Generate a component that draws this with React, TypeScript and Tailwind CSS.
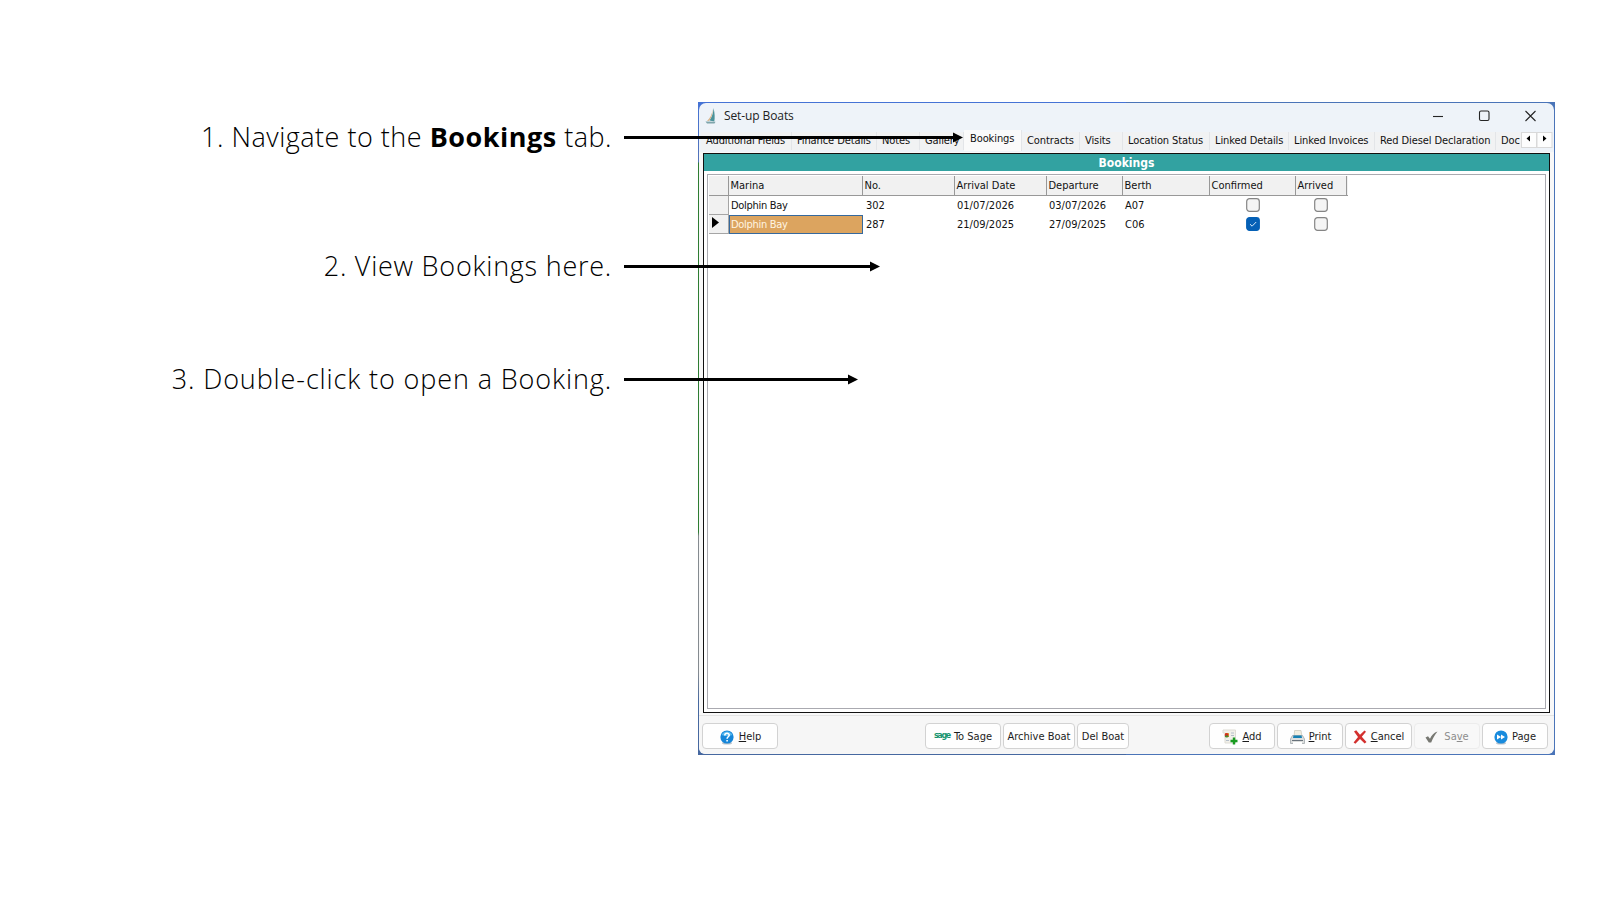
import React from 'react';
import { clsx } from 'clsx';

type Column = { title: string; className: string; check?: boolean };

const TABS = [
  { label: 'Additional Fields', className: 'w-[91px]' },
  { label: 'Finance Details', className: 'w-[85px]' },
  { label: 'Notes', className: 'w-[43px]' },
  { label: 'Gallery', className: 'w-[44px]' },
  { label: 'Bookings', className: 'w-[58px]', active: true },
  { label: 'Contracts', className: 'w-[58px]' },
  { label: 'Visits', className: 'w-[43px]' },
  { label: 'Location Status', className: 'w-[87px]' },
  { label: 'Linked Details', className: 'w-[79px]' },
  { label: 'Linked Invoices', className: 'w-[86px]' },
  { label: 'Red Diesel Declaration', className: 'w-[121px]' },
  { label: 'Doc', className: 'w-[25px] border-r-0' },
];

const COLUMNS: Column[] = [
  { title: 'Marina', className: 'w-[134px]' },
  { title: 'No.', className: 'w-[92px]' },
  { title: 'Arrival Date', className: 'w-[92px]' },
  { title: 'Departure', className: 'w-[76px]' },
  { title: 'Berth', className: 'w-[87px]' },
  { title: 'Confirmed', className: 'w-[86px]', check: true },
  { title: 'Arrived', className: 'w-[51px]', check: true },
];

const ROWS: (string | boolean)[][] = [
  ['Dolphin Bay', '302', '01/07/2026', '03/07/2026', 'A07', false, false],
  ['Dolphin Bay', '287', '21/09/2025', '27/09/2025', 'C06', true, false],
];

const Arrow = ({ length }: { length: number }) => (
  <svg width={length} height="13" viewBox={`0 0 ${length} 13`} className="mt-px shrink-0">
    <path d={`M0 6.5H${length - 8}`} stroke="#000" strokeWidth="3" />
    <path d={`M${length - 10} 1.5L${length} 6.5L${length - 10} 11.5Z`} />
  </svg>
);

const Step = ({ length, className, children }: { length: number; className: string; children: React.ReactNode }) => (
  <div className={clsx('flex h-8 items-center gap-3', className)}>
    <p className="w-[612px] shrink-0 pb-px text-right whitespace-nowrap font-['Open_Sans',sans-serif] text-[27px] leading-[30px] font-light">
      {children}
    </p>
    <Arrow length={length} />
  </div>
);

const CheckBox = ({ checked }: { checked: boolean }) => (
  <svg width="14" height="14" viewBox="0 0 14 14" className="mr-[2px] mb-[2px]">
    <rect x="0.7" y="0.7" width="12.6" height="12.6" rx="2.8" fill={checked ? '#0560b6' : '#f5f5f5'} stroke={checked ? '#0560b6' : '#858585'} strokeWidth="1.2" />
    {checked && <path d="M4 7.2L6.1 9.2L10.2 5" fill="none" stroke="#d5eafa" strokeWidth="1" />}
  </svg>
);

const BoatIcon = () => (
  <svg width="12" height="16" viewBox="0 0 12 16" className="-ml-px">
    <path d="M8.5 0C9.8 5 10 10 9.3 13.5L4.5 12.5C7 9 8.4 5 8.5 0Z" fill="#4b929a" />
    <path d="M7.6 1C7.2 6 5 10.5 2 13L4.2 12.8C6.5 9.5 7.9 5 7.6 1Z" fill="#d8b184" />
    <path d="M0.5 13.6L10.5 13.8L9.5 15.5H2Z" fill="#7fa5ac" />
  </svg>
);

const HelpIcon = () => (
  <svg width="14" height="15" viewBox="0 0 14 15">
    <ellipse cx="7" cy="13" rx="5" ry="1.6" fill="#b8c2cc" />
    <circle cx="7" cy="7" r="6.6" fill="#1686d9" />
    <path d="M1.5 5A6 6 0 0 1 12.5 5Q7 7 1.5 5Z" fill="#55b8ee" />
    <path d="M4.8 5.4C4.8 2.6 9.4 2.7 9.2 5.2C9.1 6.8 7.1 6.8 7.1 8.7M7.1 10V11.4" fill="none" stroke="#fff" strokeWidth="1.6" />
  </svg>
);

const SageIcon = () => (
  <span className="flex h-[10px] w-4 items-center justify-center pb-[3px] font-['DejaVu_Sans',sans-serif] text-[8px] leading-none font-bold tracking-[-1.3px] text-[#169570]">
    sage
  </span>
);

const AddIcon = () => (
  <svg width="16" height="16" viewBox="0 0 16 16">
    <path d="M1 1H13.5V14H3V4H1Z" fill="#f1f0ea" stroke="#dedcd5" />
    <path d="M3 4H7V8H3Z" fill="#e6b63a" />
    <circle cx="4.6" cy="6" r="2" fill="#cf2e22" />
    <path d="M2.7 7.6A2.4 2.4 0 0 0 6.8 7.2L4.6 6Z" fill="#4a8a2c" />
    <path d="M9 4H12M9 6.5H12M4 11.5H7" stroke="#b4bec9" />
    <path d="M12 8.5V15.5M8.5 12H15.5" stroke="#189b20" strokeWidth="2.4" />
  </svg>
);

const PrintIcon = () => (
  <svg width="15" height="15" viewBox="0 0 15 15">
    <path d="M4 7L4.6 0.5H11L12 7Z" fill="#f2eee0" stroke="#c9c5b8" strokeWidth="0.7" />
    <path d="M2.5 5.5H12.5L14.5 9V13.5H0.5V9Z" fill="#dcdedd" stroke="#a1a8ac" strokeWidth="0.8" />
    <path d="M3.5 5.5H11.5L12 8H3Z" fill="#1681b3" />
    <path d="M2 10.5H13" stroke="#68727b" />
    <path d="M3 12H12V14.5H3Z" fill="#fff" />
  </svg>
);

const CancelIcon = () => (
  <svg width="14" height="14" viewBox="0 0 14 14">
    <path d="M1 1.5L3.2 0.3L7 4.7L11.5 0.5L13 1.7L8.8 6.8L13.5 12L11.7 13.5L7 9L2.4 13.7L0.6 12.4L5 6.9Z" fill="#d3302e" />
  </svg>
);

const SaveIcon = () => (
  <svg width="13" height="12" viewBox="0 0 13 12">
    <path d="M0.5 6.5L3 5.2L5 7.8C6.5 4 9 1.5 12.5 0.4C9.5 4 7.6 7.7 6.2 11.5H3.8Z" fill="#777872" />
  </svg>
);

const PageIcon = () => (
  <svg width="14" height="15" viewBox="0 0 14 15">
    <ellipse cx="7" cy="13" rx="5" ry="1.6" fill="#b8c2cc" />
    <circle cx="7" cy="7" r="6.6" fill="#198bdd" />
    <path d="M3 4.6L7 7L3 9.4ZM7 4.6L11 7L7 9.4Z" fill="#fff" />
  </svg>
);

const Button = ({ className, disabled, icon, children }: { className: string; disabled?: boolean; icon?: React.ReactNode; children: React.ReactNode }) => (
  <button
    className={clsx(
      'flex h-[26px] shrink-0 items-center justify-center rounded-[4px] border pt-[2px] whitespace-nowrap',
      disabled ? 'border-[#ececec] bg-[#f8f8f8] text-[#8d8d8d]' : 'border-[#d2d2d2] bg-[#fefefe] text-[#1c1c1c]',
      className,
    )}
  >
    {icon}
    <span>{children}</span>
  </button>
);

const Key = ({ children }: { children: string }) => <span className="underline underline-offset-1">{children}</span>;

const TitleBar = () => (
  <div className="flex h-[27px] shrink-0 items-center pb-[2px] pl-[7px]">
    <BoatIcon />
    <span className="ml-[7px] flex-1 font-['Open_Sans',sans-serif] text-[12px] tracking-[-0.1px] text-[#222]">Set-up Boats</span>
    <svg width="104" height="12" viewBox="0 0 104 12" fill="none" stroke="#252525" strokeWidth="1.1" className="mr-[17px]">
      <path d="M0 6.5H10" />
      <rect x="46.5" y="1" width="9.5" height="9.5" rx="1.5" />
      <path d="M92.5 1L102.5 11M102.5 1L92.5 11" />
    </svg>
  </div>
);

const TabBar = () => (
  <div className="flex h-[22px] shrink-0 items-start pl-[2px]">
    <div className="flex w-[820px] shrink-0 items-end">
      {TABS.map((tab) => (
        <div
          key={tab.label}
          className={clsx(
            'flex shrink-0 items-center border-r border-[#e3e5e8] tracking-[-0.1px] whitespace-nowrap',
            tab.active ? 'h-[21px] bg-[#fafafa] pb-[2px] pl-[6px]' : 'mb-px h-[18px] bg-[#f1f2f3] pt-px pl-[5px]',
            tab.className,
          )}
        >
          {tab.label}
        </div>
      ))}
    </div>
    <svg width="32" height="16" viewBox="0 0 32 16" className="mt-[2px]">
      <rect x="0.5" y="0.5" width="15" height="15" fill="#fdfdfd" stroke="#d9d9d9" />
      <rect x="16" y="0.5" width="15" height="15" fill="#fdfdfd" stroke="#d9d9d9" />
      <path d="M9 3.5V9.5L5.5 6.5ZM22 3.5V9.5L25.5 6.5Z" />
    </svg>
  </div>
);

const Grid = () => (
  <div className="mx-[3px] mt-[3px] mb-[3px] flex-1 border border-[#aaaab0] bg-white p-px">
    <div className="flex h-5 w-[639px] border-b border-[#989898] bg-[#f1f1f1]">
      <div className="w-5 shrink-0 border-r border-[#989898]" />
      {COLUMNS.map((col) => (
        <div key={col.title} className={clsx('shrink-0 border-r border-[#989898] pl-[1.5px] leading-[19px]', col.className)}>
          {col.title}
        </div>
      ))}
    </div>
    {ROWS.map((row, r) => (
      <div key={r} className="flex h-[19px]">
        <div className="flex w-5 shrink-0 border-r border-b border-[#a5a5a5] bg-[#f1f1f1]">
          {r === 1 && (
            <svg width="8" height="12" viewBox="0 0 8 12" className="mt-[2px] ml-[3px]">
              <path d="M0 0L7 5.5L0 11Z" />
            </svg>
          )}
        </div>
        {row.map((value, c) => (
          <div
            key={c}
            className={clsx(
              'flex shrink-0 items-center border',
              COLUMNS[c].className,
              COLUMNS[c].check ? 'justify-center' : 'pt-[2px]',
              c === 0 && 'tracking-[-0.3px]',
              c === 1 ? 'pl-[2px]' : 'pl-px',
              r === 1 && c === 0 ? 'border-[#36699d] bg-[#dca45f] text-[#fff4e2]' : 'border-transparent',
            )}
          >
            {typeof value === 'boolean' ? <CheckBox checked={value} /> : value}
          </div>
        ))}
      </div>
    ))}
  </div>
);

const Footer = () => (
  <div className="flex h-[39px] shrink-0 items-start rounded-b-[6px] border-t border-[#e3e3e3] bg-[#f6f6f6] pt-[7px] pl-[3px]">
    <Button className="w-[76px] gap-[5px] pl-px" icon={<HelpIcon />}><Key>H</Key>elp</Button>
    <Button className="ml-[147px] w-[76px] gap-1" icon={<SageIcon />}>To Sa<Key>g</Key>e</Button>
    <Button className="ml-[2px] w-[72px]">Archive Boat</Button>
    <Button className="ml-[2px] w-[52px]">Del Boat</Button>
    <div className="ml-[80px] flex gap-[2px]">
      <Button className="w-[66px] gap-1" icon={<AddIcon />}><Key>A</Key>dd</Button>
      <Button className="w-[66px] gap-1 pl-px" icon={<PrintIcon />}><Key>P</Key>rint</Button>
      <Button className="w-[67px] gap-1" icon={<CancelIcon />}><Key>C</Key>ancel</Button>
      <Button className="w-[66px] gap-[6px]" disabled icon={<SaveIcon />}>Sa<Key>v</Key>e</Button>
      <Button className="w-[66px] gap-1" icon={<PageIcon />}>Pa<Key>g</Key>e</Button>
    </div>
  </div>
);

const BoatWindow = () => (
  <div className="flex h-[653px] w-[857px] bg-[linear-gradient(90deg,transparent_50%,#4a74b8_50%),linear-gradient(#4573d6_0,#5272b8_60px,#2e7d32_61px,#2e7d32_430px,#858b90_434px,#858b90_570px,#4668a0_600px)] p-px">
    <div className="flex min-w-0 flex-1 flex-col rounded-[7px] bg-[#eef3f9] font-['DejaVu_Sans_Condensed','DejaVu_Sans',sans-serif] text-[11px] text-[#111]">
      <TitleBar />
      <TabBar />
      <div className="flex flex-1 flex-col bg-[#f8f8f8] px-1 pt-px pb-[2px]">
        <div className="flex flex-1 flex-col border border-[#111] bg-white">
          <div className="h-[17px] bg-[#32a2a1] pt-px text-center text-[12px] leading-[17px] font-bold text-white">
            Bookings
          </div>
          <Grid />
        </div>
      </div>
      <Footer />
    </div>
  </div>
);

export default function App() {
  return (
    <div className="relative h-[900px] w-[1600px] overflow-hidden bg-white text-black">
      <div className="pt-[102px] pl-[698px]">
        <BoatWindow />
      </div>
      {/* callouts sit over the window */}
      <div className="absolute inset-0 pt-[121px]">
        <Step length={339} className="tracking-[0.5px]">1. Navigate to the <b className="font-bold">Bookings</b> tab.</Step>
        <Step length={256} className="mt-[97px] tracking-[0.75px]">2. View Bookings here.</Step>
        <Step length={234} className="mt-[81px] tracking-[0.88px]">3. Double-click to open a Booking.</Step>
      </div>
    </div>
  );
}
